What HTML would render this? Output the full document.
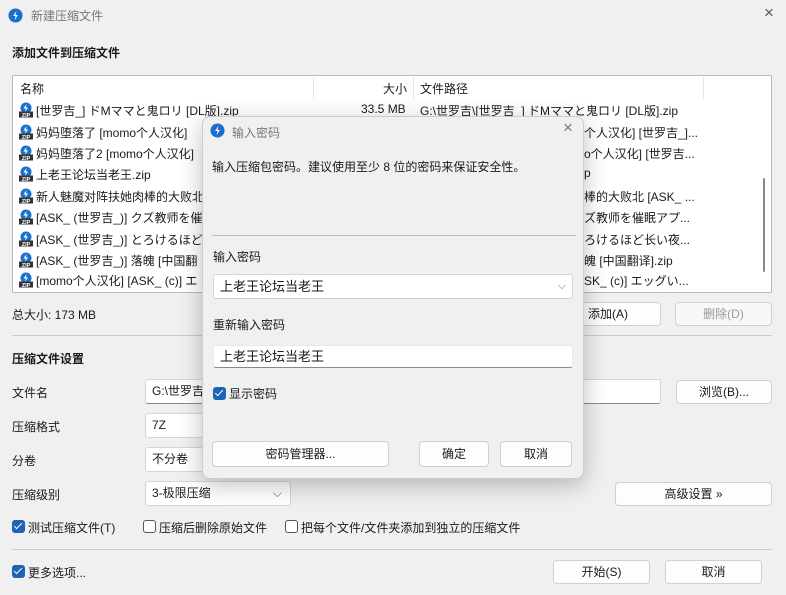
<!DOCTYPE html><html><head><meta charset="utf-8"><style>
*{box-sizing:border-box;margin:0;padding:0}
body{width:786px;height:595px;overflow:hidden;background:#f0f0f0;font-family:"Liberation Sans","Noto Sans CJK SC",sans-serif;font-size:12px;color:#1a1a1a;position:relative}
.a{position:absolute;white-space:nowrap}
.b{font-weight:bold}
.btn{position:absolute;background:#fdfdfd;border:1px solid #d0d0d0;border-radius:4px;text-align:center;font-size:12px}
.inp{position:absolute;background:#fff;border:1px solid #d6d6d6;border-bottom:1px solid #8a8a8a;border-radius:3px;padding-left:6px}
.cb{position:absolute;width:13px;height:13px;border-radius:3px}
.cb.on{background:#1e64b4}
.cb.on:after{content:"";position:absolute;left:4px;top:1px;width:3px;height:7px;border:solid #fff;border-width:0 1.5px 1.5px 0;transform:rotate(45deg)}
.cb.off{border:1px solid #555;background:#fff}
.ic{position:absolute;width:15px;height:15px}
.zip{position:absolute;left:18px;width:16px;height:16px}
</style></head><body>
<svg class="ic" style="left:8px;top:8px" viewBox="0 0 16 16"><circle cx="8" cy="8" r="7.5" fill="#1a6fcf"/><path d="M9 3L5.5 8.5H8L7 13L10.5 7.5H8Z" fill="#fff"/></svg>
<div class="a" style="left:31px;top:7px;color:#777;font-size:12px">新建压缩文件</div>
<div class="a" style="left:764px;top:3px;font-size:17px;color:#555">×</div>
<div class="a b" style="left:12px;top:44px">添加文件到压缩文件</div>
<div class="a" style="left:12px;top:75px;width:760px;height:218px;background:#fff;border:1px solid #bbb"></div>
<div class="a" style="left:20px;top:80px">名称</div>
<div class="a" style="left:313px;top:77px;width:1px;height:22px;background:#e5e5e5"></div>
<div class="a" style="left:383px;top:80px">大小</div>
<div class="a" style="left:413px;top:77px;width:1px;height:22px;background:#e5e5e5"></div>
<div class="a" style="left:420px;top:80px">文件路径</div>
<div class="a" style="left:703px;top:77px;width:1px;height:22px;background:#e5e5e5"></div>
<div class="a" style="left:763px;top:178px;width:2px;height:94px;background:#888;border-radius:1px"></div>
<div id="rows"></div>
<div class="a" style="left:36px;top:102px">[世罗吉_] ドMママと鬼ロリ [DL版].zip</div>
<div class="a" style="left:361px;top:102px">33.5 MB</div>
<div class="a" style="left:420px;top:102px">G:\世罗吉\[世罗吉_] ドMママと鬼ロリ [DL版].zip</div>
<div class="a" style="left:36px;top:124px">妈妈堕落了 [momo个人汉化]</div>
<div class="a" style="left:36px;top:145px">妈妈堕落了2 [momo个人汉化]</div>
<div class="a" style="left:36px;top:166px">上老王论坛当老王.zip</div>
<div class="a" style="left:36px;top:188px">新人魅魔对阵扶她肉棒的大败北</div>
<div class="a" style="left:36px;top:209px">[ASK_ (世罗吉_)] クズ教师を催</div>
<div class="a" style="left:36px;top:231px">[ASK_ (世罗吉_)] とろけるほど</div>
<div class="a" style="left:36px;top:252px">[ASK_ (世罗吉_)] 落魄 [中国翻</div>
<div class="a" style="left:36px;top:272px">[momo个人汉化] [ASK_ (c)] エ</div>
<div class="a" style="left:584px;top:124px">个人汉化] [世罗吉_]...</div>
<div class="a" style="left:584px;top:145px">o个人汉化] [世罗吉...</div>
<div class="a" style="left:584px;top:166px">p</div>
<div class="a" style="left:584px;top:188px">棒的大败北 [ASK_ ...</div>
<div class="a" style="left:584px;top:209px">ズ教师を催眠アプ...</div>
<div class="a" style="left:584px;top:231px">ろけるほど长い夜...</div>
<div class="a" style="left:584px;top:252px">魄 [中国翻译].zip</div>
<div class="a" style="left:584px;top:272px">SK_ (c)] エッグい...</div>
<script>
var ys=[102,124,145,166,188,209,231,252,272],h='';
ys.forEach(function(y){h+='<svg class="zip" style="top:'+y+'px" viewBox="0 0 16 16"><circle cx="8" cy="6" r="5.5" fill="#1a6fcf"/><path d="M8.5 2L5.5 6.5H7.8L7 10L10 5.5H8Z" fill="#fff"/><rect x="1" y="9.5" width="14" height="6" fill="#333"/><text x="8" y="14.8" font-size="5.5" fill="#fff" text-anchor="middle" font-family="Liberation Sans" font-weight="bold">ZIP</text></svg>';});
document.getElementById('rows').innerHTML=h;
</script>
<div class="a" style="left:12px;top:306px">总大小: 173 MB</div>
<div class="btn" style="left:555px;top:302px;width:106px;height:24px;line-height:22px">添加(A)</div>
<div class="btn" style="left:675px;top:302px;width:97px;height:24px;line-height:22px;color:#999;background:#f8f8f8">删除(D)</div>
<div class="a" style="left:12px;top:335px;width:760px;height:1px;background:#ccc"></div>
<div class="a b" style="left:12px;top:350px">压缩文件设置</div>
<div class="a" style="left:12px;top:384px">文件名</div>
<div class="inp" style="left:145px;top:379px;width:516px;height:25px;line-height:23px">G:\世罗吉</div>
<div class="btn" style="left:676px;top:380px;width:96px;height:24px;line-height:22px">浏览(B)...</div>
<div class="a" style="left:12px;top:418px">压缩格式</div>
<div class="inp" style="left:145px;top:413px;width:146px;height:25px;line-height:23px;border-bottom-color:#d6d6d6">7Z</div>
<div class="a" style="left:12px;top:452px">分卷</div>
<div class="inp" style="left:145px;top:447px;width:146px;height:25px;line-height:23px;border-bottom-color:#d6d6d6">不分卷</div>
<div class="a" style="left:12px;top:486px">压缩级别</div>
<div class="inp" style="left:145px;top:481px;width:146px;height:25px;line-height:23px;border-bottom-color:#d6d6d6">3-极限压缩<span style="position:absolute;right:8px;color:#666">⌵</span></div>
<div class="btn" style="left:615px;top:482px;width:157px;height:24px;line-height:22px">高级设置 »</div>
<div class="cb on" style="left:12px;top:520px"></div><div class="a" style="left:28px;top:519px">测试压缩文件(T)</div>
<div class="cb off" style="left:143px;top:520px"></div><div class="a" style="left:159px;top:519px">压缩后删除原始文件</div>
<div class="cb off" style="left:285px;top:520px"></div><div class="a" style="left:301px;top:519px">把每个文件/文件夹添加到独立的压缩文件</div>
<div class="a" style="left:12px;top:549px;width:760px;height:1px;background:#ccc"></div>
<div class="cb on" style="left:12px;top:565px"></div><div class="a" style="left:28px;top:564px">更多选项...</div>
<div class="btn" style="left:553px;top:560px;width:97px;height:24px;line-height:22px">开始(S)</div>
<div class="btn" style="left:665px;top:560px;width:97px;height:24px;line-height:22px">取消</div>

<div class="a" style="left:202px;top:116px;width:382px;height:363px;background:#f0f0f0;border:1px solid #ccc;border-radius:8px;box-shadow:0 6px 24px rgba(0,0,0,.25)"></div>
<svg class="ic" style="left:210px;top:123px" viewBox="0 0 16 16"><circle cx="8" cy="8" r="7.5" fill="#1a6fcf"/><path d="M9 3L5.5 8.5H8L7 13L10.5 7.5H8Z" fill="#fff"/></svg>
<div class="a" style="left:232px;top:124px;color:#777">输入密码</div>
<div class="a" style="left:563px;top:118px;font-size:17px;color:#777">×</div>
<div class="a" style="left:212px;top:158px">输入压缩包密码。建议使用至少 8 位的密码来保证安全性。</div>
<div class="a" style="left:212px;top:235px;width:364px;height:1px;background:#bbb"></div>
<div class="a" style="left:213px;top:248px">输入密码</div>
<div class="inp" style="left:213px;top:274px;width:360px;height:25px;line-height:23px;border-bottom-color:#d0d0d0;font-size:13px">上老王论坛当老王<span style="position:absolute;right:6px;color:#666;font-size:11px">⌵</span></div>
<div class="a" style="left:213px;top:316px">重新输入密码</div>
<div class="inp" style="left:213px;top:345px;width:360px;height:23px;line-height:21px;border-color:#e8e8e8;border-bottom-color:#8a8a8a;font-size:13px">上老王论坛当老王</div>
<div class="cb on" style="left:213px;top:387px"></div><div class="a" style="left:229px;top:385px">显示密码</div>
<div class="btn" style="left:212px;top:441px;width:177px;height:26px;line-height:24px">密码管理器...</div>
<div class="btn" style="left:419px;top:441px;width:70px;height:26px;line-height:24px">确定</div>
<div class="btn" style="left:500px;top:441px;width:72px;height:26px;line-height:24px">取消</div>
</body></html>
